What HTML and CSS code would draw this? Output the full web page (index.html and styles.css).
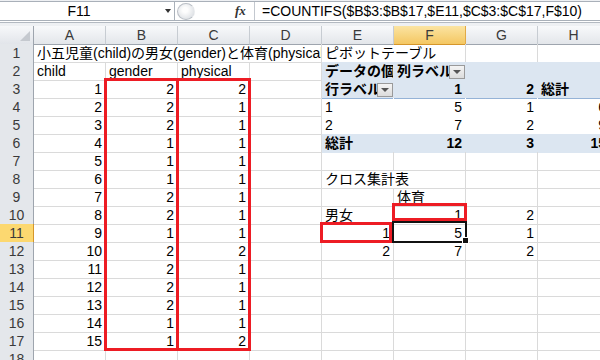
FILE: index.html
```html
<!DOCTYPE html>
<html lang="ja">
<head>
    <meta charset="UTF-8">
    <title>COUNTIFS クロス集計</title>
    <link rel="stylesheet" href="styles.css">
</head>
<body>
    <!-- Formula bar -->
    <div class="top">
        <div class="fbar">
            <div class="name-box"><span class="nb-text">F11</span><span class="nb-arrow"></span></div>
            <div class="splitter"></div>
            <div class="fx">fx</div>
            <div class="formula">=COUNTIFS($B$3:$B$17,$E11,$C$3:$C$17,F$10)</div>
        </div>
        <div class="fbar-gap"></div>
        <div class="fbar-line"></div>
    </div>

    <!-- Sheet -->
    <div class="sheet">
        <div class="row"><div class="corner"></div><div class="ch">A</div><div class="ch">B</div><div class="ch">C</div><div class="ch">D</div><div class="ch">E</div><div class="ch on">F</div><div class="ch">G</div><div class="ch">H</div></div>
        <div class="row"><div class="rh">1</div><div class="c s4">小五児童(child)の男女(gender)と体育(physical)</div><div class="c s2">ピボットテーブル</div><div class="c"></div><div class="c"></div></div>
        <div class="row"><div class="rh">2</div><div class="c">child</div><div class="c">gender</div><div class="c">physical</div><div class="c"></div><div class="c pv">データの個数 / physical</div><div class="c pv dd"><span class="dd-text">列ラベル</span><span class="dd-btn"></span></div><div class="c pv"></div><div class="c pv"></div></div>
        <div class="row"><div class="rh">3</div><div class="c n">1</div><div class="c n">2</div><div class="c n">2</div><div class="c"></div><div class="c pv bl dd"><span class="dd-text">行ラベル</span><span class="dd-btn"></span></div><div class="c pv bl n">1</div><div class="c pv bl n">2</div><div class="c pv bl">総計</div></div>
        <div class="row"><div class="rh">4</div><div class="c n">2</div><div class="c n">2</div><div class="c n">1</div><div class="c"></div><div class="c pw">1</div><div class="c pw n">5</div><div class="c pw n">1</div><div class="c pw n">6</div></div>
        <div class="row"><div class="rh">5</div><div class="c n">3</div><div class="c n">2</div><div class="c n">1</div><div class="c"></div><div class="c pw bl">2</div><div class="c pw bl n">7</div><div class="c pw bl n">2</div><div class="c pw bl n">9</div></div>
        <div class="row"><div class="rh">6</div><div class="c n">4</div><div class="c n">1</div><div class="c n">1</div><div class="c"></div><div class="c pv">総計</div><div class="c pv n">12</div><div class="c pv n">3</div><div class="c pv n">15</div></div>
        <div class="row"><div class="rh">7</div><div class="c n">5</div><div class="c n">1</div><div class="c n">1</div><div class="c"></div><div class="c"></div><div class="c"></div><div class="c"></div><div class="c"></div></div>
        <div class="row"><div class="rh">8</div><div class="c n">6</div><div class="c n">1</div><div class="c n">1</div><div class="c"></div><div class="c s2">クロス集計表</div><div class="c"></div><div class="c"></div></div>
        <div class="row"><div class="rh">9</div><div class="c n">7</div><div class="c n">2</div><div class="c n">1</div><div class="c"></div><div class="c"></div><div class="c">体育</div><div class="c"></div><div class="c"></div></div>
        <div class="row"><div class="rh">10</div><div class="c n">8</div><div class="c n">2</div><div class="c n">1</div><div class="c"></div><div class="c">男女</div><div class="c n">1</div><div class="c n">2</div><div class="c"></div></div>
        <div class="row"><div class="rh on">11</div><div class="c n">9</div><div class="c n">1</div><div class="c n">1</div><div class="c"></div><div class="c n">1</div><div class="c n">5</div><div class="c n">1</div><div class="c"></div></div>
        <div class="row"><div class="rh">12</div><div class="c n">10</div><div class="c n">2</div><div class="c n">2</div><div class="c"></div><div class="c n">2</div><div class="c n">7</div><div class="c n">2</div><div class="c"></div></div>
        <div class="row"><div class="rh">13</div><div class="c n">11</div><div class="c n">2</div><div class="c n">1</div><div class="c"></div><div class="c"></div><div class="c"></div><div class="c"></div><div class="c"></div></div>
        <div class="row"><div class="rh">14</div><div class="c n">12</div><div class="c n">2</div><div class="c n">1</div><div class="c"></div><div class="c"></div><div class="c"></div><div class="c"></div><div class="c"></div></div>
        <div class="row"><div class="rh">15</div><div class="c n">13</div><div class="c n">2</div><div class="c n">1</div><div class="c"></div><div class="c"></div><div class="c"></div><div class="c"></div><div class="c"></div></div>
        <div class="row"><div class="rh">16</div><div class="c n">14</div><div class="c n">1</div><div class="c n">1</div><div class="c"></div><div class="c"></div><div class="c"></div><div class="c"></div><div class="c"></div></div>
        <div class="row"><div class="rh">17</div><div class="c n">15</div><div class="c n">1</div><div class="c n">2</div><div class="c"></div><div class="c"></div><div class="c"></div><div class="c"></div><div class="c"></div></div>
        <div class="row"><div class="rh">18</div><div class="c"></div><div class="c"></div><div class="c"></div><div class="c"></div><div class="c"></div><div class="c"></div><div class="c"></div><div class="c"></div></div>

        <!-- highlight boxes drawn over the grid -->
        <div class="box box-b"></div>
        <div class="box box-c"></div>
        <div class="box box-f10"></div>
        <div class="box box-e11"></div>
        <div class="sel"></div>
        <div class="handle"></div>
    </div>
</body>
</html>
```

FILE: styles.css
```css
body {
    margin: 0;
    width: 600px;
    height: 360px;
    overflow: hidden;
    background-color: #fff;
    font-family: "Liberation Sans", "Noto Sans CJK JP", sans-serif;
    font-size: 14px;
    color: #000;
}

/* formula bar */
.top {
    height: 26px;
    padding-top: 1px;
    box-sizing: border-box;
    background-color: #eef0f3;
}
.fbar {
    height: 20px;
    display: flex;
    align-items: center;
    background-color: #fff;
    border-top: 1px solid #a9b0b9;
    border-bottom: 1px solid #a9b0b9;
    box-sizing: border-box;
}
.fbar-gap {
    height: 1px;
    background-color: #fff;
}
.fbar-line {
    height: 1px;
    background-color: #b3b9c1;
}
.name-box {
    width: 175px;
    height: 100%;
    display: flex;
    align-items: center;
    border-right: 1px solid #a9b0b9;
    box-sizing: border-box;
}
.nb-text {
    width: 158px;
    text-align: center;
}
.nb-arrow {
    margin-left: 7px;
    border-left: 3px solid transparent;
    border-right: 3px solid transparent;
    border-top: 4px solid #333;
}
.splitter {
    width: 18px;
    height: 17px;
    margin-left: 2px;
    border-radius: 50%;
    border: 1px solid #b9bec5;
    border-right-color: transparent;
    box-sizing: border-box;
    background: radial-gradient(circle at 45% 40%, #fdfdfd 20%, #dfe2e6 75%, #fff 100%);
}
.fx {
    margin-left: 40px;
    width: 14px;
    font-family: "Liberation Serif", serif;
    font-style: italic;
    font-weight: bold;
    font-size: 13px;
    color: #333;
}
.formula {
    height: 100%;
    margin-left: 5px;
    padding-left: 7px;
    border-left: 1px solid #c3c8cf;
    line-height: 18px;
    white-space: nowrap;
}

/* grid */
.sheet {
    position: relative;
}
.row {
    display: grid;
    grid-template-columns: 34px repeat(8, 72px);
    height: 18px;
}
.c {
    padding: 1px 3px 0;
    line-height: 17px;
    border-right: 1px solid #dadada;
    border-bottom: 1px solid #dadada;
    white-space: nowrap;
    overflow: hidden;
}
.n {
    text-align: right;
}
.s2 {
    grid-column: span 2;
}
.s4 {
    grid-column: span 4;
}

/* headers */
.corner {
    display: flex;
    align-items: flex-end;
    justify-content: flex-end;
    padding: 0 3px 3px 0;
    background: linear-gradient(#f7f8fa, #e2e5ea);
    border-right: 1px solid #9ea5ae;
    border-bottom: 1px solid #9ea5ae;
}
.corner::after {
    content: "";
    border-left: 10px solid transparent;
    border-bottom: 10px solid #c5c9cf;
}
.ch {
    padding-top: 1px;
    line-height: 17px;
    text-align: center;
    color: #3a3a3a;
    background: linear-gradient(#f8f9fb, #e3e6ea);
    border-right: 1px solid #c7ccd2;
    border-bottom: 1px solid #9ea5ae;
}
.ch.on {
    background: linear-gradient(#fbe4a2, #f4c762);
    border-right-color: #e1aa47;
    border-bottom-color: #d5962b;
}
.rh {
    padding-top: 1px;
    line-height: 17px;
    text-align: center;
    color: #3a3a3a;
    background-color: #e4e7eb;
    border-right: 1px solid #9ea5ae;
    border-bottom: 1px solid #c7ccd2;
}
.rh.on {
    background-color: #fcd870;
    border-bottom-color: #e1aa47;
    border-right-color: #d5962b;
}

/* pivot table */
.pv {
    font-weight: bold;
    background-color: #dce6f1;
    border-right-color: #dce6f1;
    border-bottom-color: #dce6f1;
}
.pw {
    border-right-color: #fff;
    border-bottom-color: #fff;
}
.pv.bl, .pw.bl {
    border-bottom-color: #95b3d7;
}
.dd {
    display: flex;
    padding-right: 0;
}
.dd-text {
    flex: 1;
    overflow: hidden;
}
.dd-btn {
    flex: none;
    width: 16px;
    height: 14px;
    margin-top: 2px;
    display: flex;
    align-items: center;
    justify-content: center;
    background: linear-gradient(#f4f4f4, #dcdcdc);
    border: 1px solid #9a9a9a;
    box-sizing: border-box;
}
.dd-btn::after {
    content: "";
    border-left: 4px solid transparent;
    border-right: 4px solid transparent;
    border-top: 4px solid #555;
}

/* red marks and active cell */
.box {
    position: absolute;
    border: 3px solid #ed1c24;
    box-sizing: border-box;
}
.box-b {
    left: 104px;
    top: 52px;
    width: 75px;
    height: 273px;
}
.box-c {
    left: 176px;
    top: 52px;
    width: 75px;
    height: 273px;
}
.box-f10 {
    left: 392px;
    top: 177px;
    width: 75px;
    height: 18px;
}
.box-e11 {
    left: 320px;
    top: 196px;
    width: 72px;
    height: 21px;
}
.sel {
    position: absolute;
    left: 392px;
    top: 195px;
    width: 75px;
    height: 22px;
    border: 2px solid #111;
    box-sizing: border-box;
}
.handle {
    position: absolute;
    left: 462px;
    top: 211px;
    width: 7px;
    height: 7px;
    background-color: #111;
    border: 1px solid #fff;
    box-sizing: border-box;
}
```
